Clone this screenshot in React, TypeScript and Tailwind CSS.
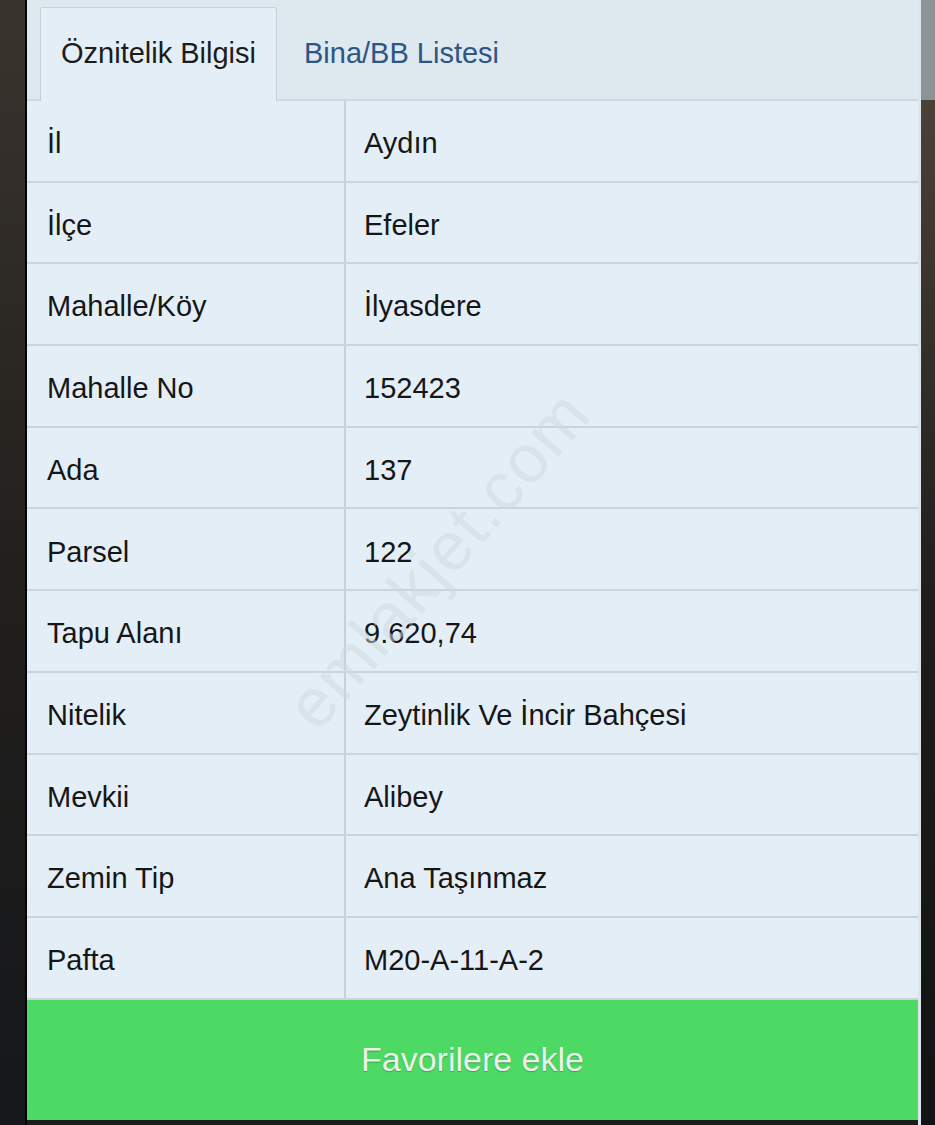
const rows: [string, string][] = [
  ['İl', 'Aydın'],
  ['İlçe', 'Efeler'],
  ['Mahalle/Köy', 'İlyasdere'],
  ['Mahalle No', '152423'],
  ['Ada', '137'],
  ['Parsel', '122'],
  ['Tapu Alanı', '9.620,74'],
  ['Nitelik', 'Zeytinlik Ve İncir Bahçesi'],
  ['Mevkii', 'Alibey'],
  ['Zemin Tip', 'Ana Taşınmaz'],
  ['Pafta', 'M20-A-11-A-2'],
];

export default function App() {
  return (
    <div className="flex w-[935px] h-[1125px] bg-[#1b1c1b] overflow-hidden font-['Liberation_Sans',Arial,sans-serif]">
      {/* left photo edge */}
      <div className="w-[25px] shrink-0 bg-gradient-to-b from-[#3a342e] via-[#22201d] to-[#15171a]" />
      <div className="w-[2px] shrink-0 bg-[#050505]" />

      {/* panel */}
      <div className="relative w-[891px] shrink-0 flex flex-col h-[1120px] bg-[#e3eef6]">
        {/* tabs */}
        <div className="flex items-end h-[101px] bg-[#dde8ef] border-b-2 border-[#cfd9df] pl-[13px]">
          <div className="flex items-center justify-center w-[237px] h-[94px] bg-[#e3eef6] border border-b-0 border-[#c6d0d7] rounded-t-[3px] -mb-[2px] text-[29px] text-[#1c1c1c] pb-[2px]">
            Öznitelik Bilgisi
          </div>
          <div className="flex items-center h-[94px] pl-[27px] text-[29px] text-[#2f5584] pt-[4px]">
            Bina/BB Listesi
          </div>
        </div>

        {/* table */}
        <div className="flex flex-col">
          {rows.map(([k, v]) => (
            <div key={k} className="flex h-[81.7px] border-b-2 border-[#cad4da]">
              <div className="w-[319px] shrink-0 flex items-center pl-[20px] pt-[6px] text-[29px] text-[#161616] border-r-2 border-[#c6d0d7]">
                {k}
              </div>
              <div className="flex-1 flex items-center pl-[18px] pt-[6px] text-[29px] text-[#161616]">
                {v}
              </div>
            </div>
          ))}
        </div>

        {/* button */}
        <button className="flex-1 flex items-center justify-center bg-[#4cd964] text-[34px] text-[#eaf2ea] [text-shadow:0_1px_1px_rgba(0,0,0,0.25)]">
          Favorilere ekle
        </button>

        {/* watermark */}
        <div className="pointer-events-none absolute left-[200px] top-[508px] -rotate-[49deg] origin-center text-[68px] text-[#cdd7de]/50 tracking-wide">
          emlakjet.com
        </div>
      </div>

      {/* right edge */}
      <div className="w-[3px] shrink-0 bg-[#dce6ec]" />
      <div className="flex-1 flex flex-col">
        <div className="h-[100px] bg-[#8d9496]" />
        <div className="flex-1 bg-gradient-to-b from-[#4a4238] via-[#1e1d1b] to-[#111314]" />
      </div>
    </div>
  );
}
